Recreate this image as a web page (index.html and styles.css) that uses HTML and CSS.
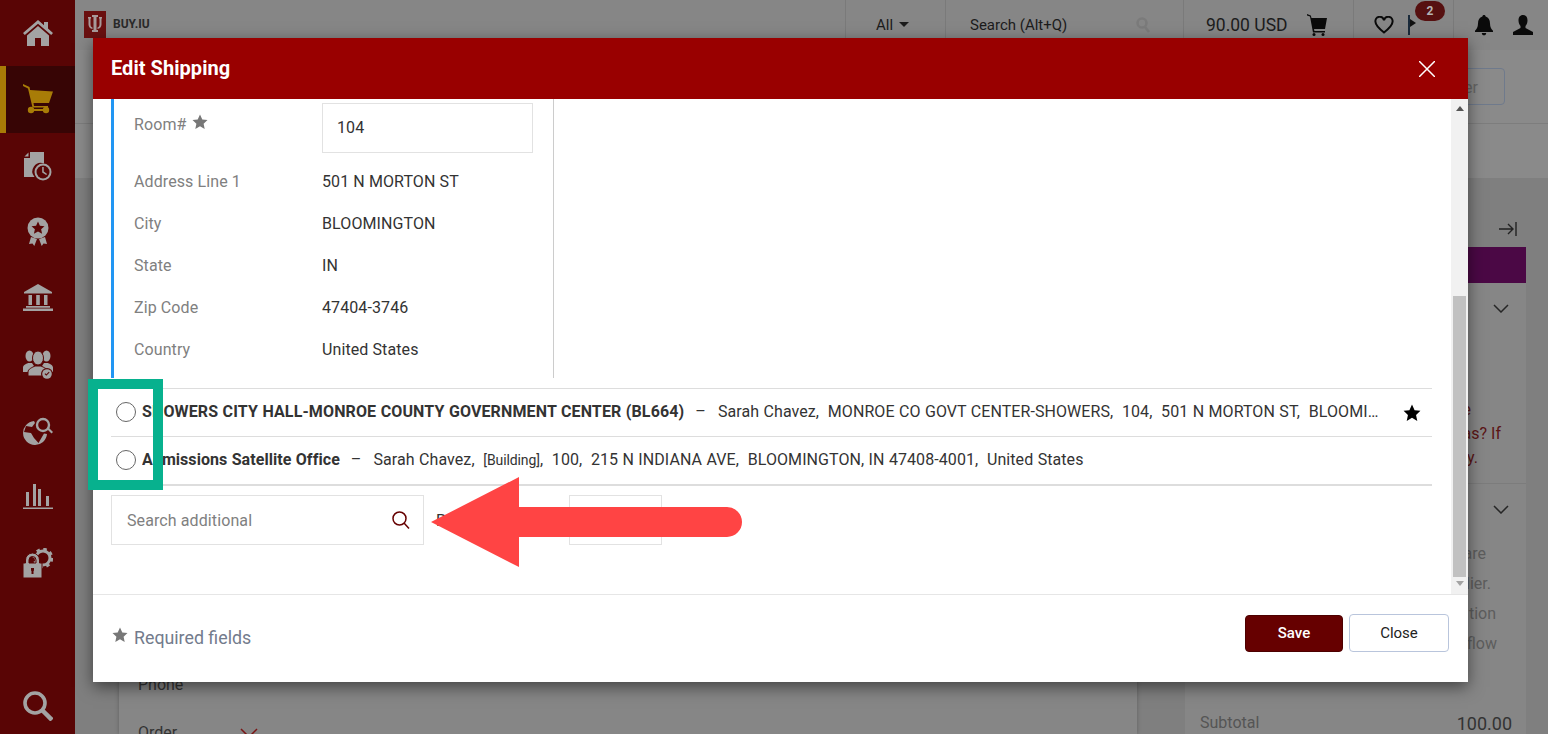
FILE: index.html
```html
<!DOCTYPE html>
<html lang="en">
<head>
<meta charset="utf-8">
<title>Edit Shipping</title>
<link rel="stylesheet" href="styles.css">
</head>
<body>
<div class="app">
  <nav class="sidebar">
    <a class="nav-item"><svg class="nav-icon" viewBox="0 0 30 30"><path d="M15 2 0 15l1.8 2L15 5.800 28.200 17l1.800-2-5-4.400V4h-4v3.200z"/><path d="M4 17.500 15 8l11 9.500V28h-8v-8h-6v8H4z"/></svg></a>
    <a class="nav-item active"><svg class="nav-icon" viewBox="0 0 30 30"><path d="M0 0l6.500 3 .6 3 22.900 1.500L26 19H10.500l.5 3H25v1.500H9.500L5 4.500 0 2z"/><circle cx="8" cy="26" r="3.200"/><circle cx="23" cy="26" r="3.200"/><path d="M8 25h15v2H8z"/></svg></a>
    <a class="nav-item"><svg class="nav-icon" viewBox="0 0 30 30"><path d="M7 1h14v11.500A8.500 8.500 0 0 0 11.500 26H1V7h6zM5.500 1.500v4h-4z"/><circle cx="20" cy="21" r="8.500"/><circle class="cut" cx="20" cy="21" r="6.500"/><path d="M19.200 16h1.500v4.600l3.400 2.300-.9 1.200-4-2.700z"/></svg></a>
    <a class="nav-item"><svg class="nav-icon" viewBox="0 0 30 30"><circle cx="15" cy="11" r="10.500"/><path class="cut" d="m15 4.500 1.900 4.200 4.600.5-3.400 3.100 1 4.500-4.100-2.300-4.100 2.300 1-4.500-3.400-3.100 4.600-.5z"/><path d="M8 20l6 2-2.700 7-1.800-2.400-3.500.4zM22 20l-6 2 2.700 7 1.800-2.400 3.500.4z"/></svg></a>
    <a class="nav-item"><svg class="nav-icon" viewBox="0 0 30 30"><path d="M15 1 1 9v1.500h28V9zM5.500 12H9v10H5.500zM13.200 12h3.600v10h-3.600zM21 12h3.500v10H21zM3 23h24v1.800H3zM0 25.500h30V28H0z"/></svg></a>
    <a class="nav-item"><svg class="nav-icon" viewBox="0 0 30 30"><ellipse cx="6.500" cy="7" rx="4" ry="5.500"/><path d="M0 23v-4.500c0-2.500 3-3.500 5-4.500h4l2 3-6 6z"/><ellipse cx="23.500" cy="7" rx="4" ry="5.500"/><path d="M30 23v-4.500c0-2.500-3-3.500-5-4.500h-4l-2 3 6 6z"/><ellipse class="outlined" cx="15" cy="9" rx="5.500" ry="7"/><path class="outlined" d="M5 27v-4c0-3 4-4.500 7-6h6c3 1.500 7 3 7 6v4z"/><circle class="cut" cx="24" cy="25" r="6"/><circle cx="24" cy="25" r="4.800"/><path class="cut" d="m21.500 25 1.800 1.800 3.300-3.300-.8-.8-2.500 2.500-1-1z"/></svg></a>
    <a class="nav-item"><svg class="nav-icon" viewBox="0 0 30 30"><path d="M11 5a12 12 0 1 0 13 13l-3-.5-5.500 9.500L11 22l-3-5-7-1 2-6 6 1 3-4z"/><circle cx="20" cy="9" r="6" class="lens"/><path d="m24 13 1.500-1.500 4.500 4.500-1.500 1.500z"/></svg></a>
    <a class="nav-item"><svg class="nav-icon" viewBox="0 0 30 30"><path d="M3 10h3v14H3zM10 2h3v22h-3zM15 7h3v17h-3zM23 14h3v10h-3zM0 25.500h30v1.500H0z"/></svg></a>
    <a class="nav-item"><svg class="nav-icon" viewBox="0 0 30 30"><circle class="gear-body" cx="20" cy="10" r="7"/><circle class="gear-teeth" cx="20" cy="10" r="9"/><path class="outlined" fill-rule="evenodd" d="M0 15h2.500v-3a7 7 0 0 1 14 0v3H19v15H0zM6 15h7v-3a3.500 3.500 0 0 0-7 0z"/><path class="cut" d="M8 20h3v2.500l-.5.500v3h-2v-3L8 22.500z"/></svg></a>
    <a class="nav-item search"><svg class="nav-icon" viewBox="0 0 30 30"><circle class="ring" cx="12" cy="12" r="10"/><path class="handle" d="m19 19 10 10"/></svg></a>
  </nav>

  <main class="page">
    <header class="topbar">
      <div class="brand">
        <svg class="brand-mark" viewBox="0 0 22 27"><path class="mark-bg" d="M0 0h22v27H0z"/><path class="mark-fg" d="M8 4h6v2h-1.500v13H14v2H8v-2h1.500V6H8zM4 6h3v1.500H6.500v6c0 1.500.7 2.500 2 3v1.500c-2.500-.5-4-2.300-4-4.500v-6H4zM15 6h3v1.500h-.5v6c0 2.200-1.500 4-4 4.500v-1.500c1.300-.5 2-1.500 2-3v-6H15z"/></svg>
        <span class="brand-name">BUY.IU</span>
      </div>
      <div class="cell cell-scope">All <span class="caret"></span></div>
      <div class="cell cell-search">
        <span>Search (Alt+Q)</span>
        <svg class="ghost-search" viewBox="0 0 16 16"><circle cx="7" cy="6" r="4.500"/><path d="m10 10 4 5"/></svg>
      </div>
      <div class="cell cell-cart">
        <span class="amount">90.00 USD</span>
        <svg class="top-icon" viewBox="0 0 20 22"><path d="M0 0l3.800 1.500L4.500 4H20l-2 11H7l.4 2H18v1.500H6L3 2.500 0 1.500z"/><circle cx="7" cy="20.500" r="1.500"/><circle cx="16" cy="20.500" r="1.500"/></svg>
      </div>
      <div class="cell cell-alerts">
        <svg class="heart" viewBox="0 0 20 18"><path d="M10 16.500C5 12.500 1.500 9.500 1.500 6A4.200 4.200 0 0 1 10 4.200 4.200 4.200 0 0 1 18.500 6c0 3.500-3.500 6.500-8.500 10.500z"/></svg>
        <span class="flag"><span class="badge">2</span></span>
      </div>
      <div class="cell cell-user">
        <svg class="top-icon" viewBox="0 0 20 22"><path d="M10 1c1 0 1.600.7 1.600 1.600C14.600 3.400 16 6 16 9.500c0 4 1.500 5.800 3 7.300V18H1v-1.200c1.500-1.500 3-3.300 3-7.300 0-3.500 1.400-6.100 4.400-6.900C8.400 1.700 9 1 10 1z"/><path d="M7.800 19h4.400c0 1.400-1 2.300-2.200 2.300S7.800 20.400 7.800 19z"/></svg>
        <svg class="top-icon" viewBox="0 0 20 20"><path d="M10 0c3 0 4.500 2.300 4.500 5.500 0 2.500-1 4.500-2 5.500v2l7.500 4v3H0v-3l7.500-4v-2c-1-1-2-3-2-5.500C5.500 2.300 7 0 10 0z"/></svg>
      </div>
    </header>
    <div class="subbar"><span class="sub-button">Checkout Order</span></div>
    <div class="band"></div>
    <div class="content">
      <section class="card">
        <p class="card-label">Phone</p>
        <div class="card-order">
          <span class="card-label">Order</span>
          <svg class="order-chevron" viewBox="0 0 18 10"><path d="m1 1 8 8 8-8"/></svg>
        </div>
      </section>
      <aside class="panel">
        <div class="panel-tool">
          <svg class="collapse" viewBox="0 0 18 16"><path d="M0 8h14M9 3l5 5-5 5M17 1v14"/></svg>
        </div>
        <div class="panel-head"></div>
        <div class="panel-sec sec-one">
          <svg class="chev" viewBox="0 0 16 9"><path d="m1 1 7 7 7-7"/></svg>
          <p class="warn warn-a">e</p>
          <p class="warn warn-b">as? If</p>
          <p class="warn warn-c">y.</p>
        </div>
        <div class="panel-sec sec-two">
          <svg class="chev" viewBox="0 0 16 9"><path d="m1 1 7 7 7-7"/></svg>
          <p class="info info-a">are</p>
          <p class="info info-b">lier.</p>
          <p class="info info-c">tion</p>
          <p class="info info-d">flow</p>
        </div>
        <div class="total"><span>Subtotal</span><span class="total-num">100.00</span></div>
      </aside>
    </div>
  </main>

  <div class="modal">
    <div class="modal-head">
      <h2 class="modal-title">Edit Shipping</h2>
      <svg class="modal-x" viewBox="0 0 16 16"><path d="m0 0 16 16M16 0 0 16"/></svg>
    </div>
    <div class="modal-body">
      <div class="modal-scroll">
        <div class="address">
          <div class="fields">
            <div class="field field-room">
              <span class="f-label">Room# <svg class="star-grey" viewBox="0 0 16 16"><path d="m8 .5 2.300 5 5.200.6-3.900 3.600 1.100 5.300L8 12.300 3.300 15l1.100-5.300L.5 6.100l5.200-.6z"/></svg></span>
              <span class="f-input">104</span>
            </div>
            <div class="field"><span class="f-label">Address Line 1</span><span>501 N MORTON ST</span></div>
            <div class="field"><span class="f-label">City</span><span>BLOOMINGTON</span></div>
            <div class="field"><span class="f-label">State</span><span>IN</span></div>
            <div class="field"><span class="f-label">Zip Code</span><span>47404-3746</span></div>
            <div class="field"><span class="f-label">Country</span><span>United States</span></div>
          </div>
        </div>
        <div class="options">
          <div class="option">
            <span class="radio"></span>
            <span class="option-text"><b class="caps">SHOWERS CITY HALL-MONROE COUNTY GOVERNMENT CENTER (BL664)</b><span class="dash">–</span>Sarah Chavez,&nbsp; MONROE CO GOVT CENTER-SHOWERS,&nbsp; 104,&nbsp; 501 N MORTON ST,&nbsp; BLOOMINGTON, IN 47404-3746,&nbsp; United States</span>
            <svg class="star-black" viewBox="0 0 16 16"><path d="m8 .5 2.300 5 5.200.6-3.900 3.600 1.100 5.300L8 12.300 3.300 15l1.100-5.300L.5 6.100l5.200-.6z"/></svg>
          </div>
          <div class="option">
            <span class="radio"></span>
            <span class="option-text"><b>Admissions Satellite Office</b><span class="dash">–</span>Sarah Chavez,&nbsp; <small>[Building]</small>,&nbsp; 100,&nbsp; 215 N INDIANA AVE,&nbsp; BLOOMINGTON, IN 47408-4001,&nbsp; United States</span>
          </div>
        </div>
        <div class="search-row">
          <div class="search-box">
            <span>Search additional</span>
            <svg class="search-glyph" viewBox="0 0 18 18"><circle cx="7.500" cy="7.500" r="6.500"/><path d="m12 12 5 5.500"/></svg>
          </div>
          <span class="per-label">Per page</span>
          <span class="per-box"></span>
        </div>
      </div>
      <div class="scrollbar">
        <span class="sb-up"></span>
        <span class="sb-thumb"></span>
        <span class="sb-down"></span>
      </div>
    </div>
    <div class="modal-foot">
      <div class="required">
        <svg class="star-grey" viewBox="0 0 16 16"><path d="m8 .5 2.300 5 5.200.6-3.900 3.600 1.100 5.300L8 12.300 3.300 15l1.100-5.300L.5 6.100l5.200-.6z"/></svg>
        <span>Required fields</span>
      </div>
      <div class="actions">
        <button class="btn btn-save">Save</button>
        <button class="btn btn-close">Close</button>
      </div>
    </div>
  </div>

  <div class="mark-box"></div>
  <svg class="mark-arrow" viewBox="0 0 312 90"><path d="M1 45 89 0v30h208a15 15 0 0 1 0 30H89v30z"/></svg>
</div>
</body>
</html>
```

FILE: styles.css
```css
* { box-sizing: border-box; }
html, body { margin: 0; height: 100%; overflow: hidden; }
body { font-family: Roboto, "Liberation Sans", sans-serif; font-size: 16px; color: #333; background: #7f7f7f; }
p, h2 { margin: 0; }

.app { position: relative; display: flex; width: 1548px; height: 734px; overflow: hidden; }

/* sidebar */
.sidebar { flex: 0 0 75px; display: flex; flex-direction: column; background: #590505; }
.nav-item { flex: 0 0 66.25px; display: flex; align-items: center; justify-content: center; }
.nav-icon { width: 30px; height: 30px; fill: #a3a3a3; }
.nav-icon .cut { fill: #590505; }
.nav-icon .outlined { stroke: #590505; stroke-width: 1; }
.nav-icon .lens { fill: none; stroke: #a3a3a3; stroke-width: 2.400; }
.nav-icon .gear-body { fill: none; stroke: #a3a3a3; stroke-width: 3; }
.nav-icon .gear-teeth { fill: none; stroke: #a3a3a3; stroke-width: 2.500; stroke-dasharray: 3.500 3.570; }
.nav-item.active { background: #370505; border-left: 6px solid #a87c07; padding-right: 6px; }
.nav-item.active .nav-icon { fill: #a87c07; }
.nav-item.search { margin-top: auto; flex-basis: 56px; }
.ring, .handle { fill: none; stroke: #a3a3a3; stroke-width: 3.600; }
.handle { stroke-width: 4.500; }

/* page behind the dialog */
.page { flex: 1; display: flex; flex-direction: column; min-width: 0; }
.topbar { flex: 0 0 50px; display: flex; background: #868686; color: #1c1c1c; }
.brand { flex: 1; display: flex; align-items: flex-start; gap: 7px; padding: 11px 0 0 9px; }
.brand-mark { width: 22px; height: 27px; }
.mark-bg { fill: #6a1010; }
.mark-fg { fill: #a89a9a; }
.brand-name { font-size: 12px; font-weight: 700; line-height: 27px; color: #2a2a2a; }
.cell { display: flex; align-items: center; border-left: 1px solid #7a7a7a; padding-bottom: 1px; }
.cell-scope { flex: 0 0 100px; padding-left: 30px; font-size: 15px; }
.caret { margin-left: 6px; border: 5px solid transparent; border-top-color: #1c1c1c; border-bottom-width: 0; }
.cell-search { flex: 0 0 238px; padding-left: 24px; font-size: 15px; gap: 68px; }
.ghost-search { width: 16px; height: 16px; fill: none; stroke: #7b7b7b; stroke-width: 2.500; }
.cell-cart { flex: 0 0 170px; padding-left: 22px; gap: 19px; }
.amount { font-size: 17.500px; }
.top-icon { width: 20px; height: 22px; fill: #0a0a0a; }
.cell-alerts { flex: 0 0 100px; padding-left: 20px; }
.heart { width: 20px; height: 18px; fill: none; stroke: #0a0a0a; stroke-width: 2; }
.flag { position: relative; width: 8px; height: 20px; margin-left: 14px; border-left: 2px solid #1a2a3a; }
.flag::after { content: ""; position: absolute; left: 0; top: 4px; border: 4px solid transparent; border-left: 6px solid #111; }
.badge { position: absolute; z-index: 1; left: 5px; top: -14px; width: 30px; height: 20px; border-radius: 10px; background: #561010; color: #b5b5b5; font-size: 12px; font-weight: 700; line-height: 20px; text-align: center; }
.cell-user { flex: 0 0 95px; padding-left: 20px; gap: 19px; }

.subbar { flex: 0 0 74px; display: flex; justify-content: flex-end; align-items: flex-start; padding: 18px 43px 0 0; background: #8a8a8a; border-bottom: 1px solid #7d7d7d; }
.sub-button { padding: 0 26px 0 20px; height: 37px; line-height: 37px; border: 1px solid #6f7a8c; border-radius: 4px; color: #666; }
.band { flex: 0 0 54px; background: #8a8a8a; }

.content { flex: 1; display: flex; gap: 48px; padding: 0 22px 0 44px; min-height: 0; }
.card { flex: 0 0 1018px; background: #868686; padding: 495px 0 0 19px; box-shadow: 0 0 4px rgba(0,0,0,.25); }
.card-label { color: #333; line-height: 24px; }
.card-order { display: flex; align-items: center; margin-top: 24px; gap: 63px; }
.order-chevron { width: 18px; height: 10px; fill: none; stroke: #7a1515; stroke-width: 1.500; }

.panel { flex: 0 0 341px; display: flex; flex-direction: column; }
.panel-tool { flex: 0 0 69px; display: flex; justify-content: flex-end; align-items: flex-start; padding: 43px 9px 0 0; }
.collapse { width: 18px; height: 16px; fill: none; stroke: #222; stroke-width: 1.400; }
.panel-head { flex: 0 0 36px; background: #4b0845; }
.panel-sec { position: relative; background: #868686; border-bottom: 1px solid #7c7c7c; }
.chev { position: absolute; right: 17px; width: 16px; height: 9px; fill: none; stroke: #262626; stroke-width: 1.500; }
.sec-one { flex: 0 0 201px; padding-top: 115px; }
.sec-one .chev { top: 21px; }
.warn { line-height: 24px; color: #5b1515; text-align: right; }
.warn-a { padding-right: 55px; }
.warn-b { padding-right: 25px; }
.warn-c { padding-right: 48px; }
.sec-two { flex: 0 0 214px; padding-top: 55px; border-bottom: 0; }
.sec-two .chev { top: 21px; }
.info { line-height: 30px; color: #5d5d5d; text-align: right; }
.info-a { padding-right: 40px; }
.info-b { padding-right: 35px; }
.info-c { padding-right: 30px; }
.info-d { padding-right: 29px; }
.total { flex: 1; display: flex; justify-content: space-between; align-items: flex-start; padding: 15px 14px 0 15px; background: #868686; color: #555; }
.total-num { font-size: 18px; color: #333; }

/* dialog */
.modal { position: absolute; left: 93px; top: 38px; width: 1375px; height: 644px; display: flex; flex-direction: column; background: #fff; box-shadow: 0 5px 15px rgba(0,0,0,.5); }
.modal-head { flex: 0 0 61px; display: flex; align-items: center; justify-content: space-between; padding: 0 33px 2px 18px; background: #990000; color: #fff; }
.modal-title { font-size: 20px; font-weight: 700; letter-spacing: .05px; }
.modal-x { width: 16px; height: 16px; margin-top: 2px; fill: none; stroke: #fff; stroke-width: 1.500; }
.modal-body { flex: 1; display: flex; min-height: 0; border-bottom: 1px solid #e6e6e6; }
.modal-scroll { flex: 1; min-width: 0; padding: 0 19px 0 18px; }

.address { height: 279px; border-left: 3px solid #2196f3; padding-left: 20px; }
.fields { width: 420px; height: 100%; padding-top: 4px; border-right: 1px solid #ccc; }
.field { display: flex; align-items: center; height: 42px; color: #333; letter-spacing: .1px; }
.f-label { flex: 0 0 188px; color: #808080; }
.field-room { height: 57px; align-items: flex-start; }
.field-room .f-label { padding-top: 11px; }
.f-input { width: 211px; height: 50px; padding-left: 14px; line-height: 48px; border: 1px solid #e2e2e2; }
.star-grey { width: 16px; height: 16px; margin-left: 1px; fill: #777; }

.options { margin-top: 10px; border-bottom: 2px solid #ddd; }
.option { display: flex; align-items: center; height: 48px; padding: 0 0 2px 5px; border-top: 1px solid #ddd; color: #333; }
.radio { flex: 0 0 20px; height: 20px; margin-right: 6px; border: 1px solid #666; border-radius: 50%; background: #fff; }
.option-text { flex: 0 0 1241px; white-space: nowrap; overflow: hidden; text-overflow: ellipsis; letter-spacing: .08px; word-spacing: .3px; }
.option-text b { font-weight: 700; letter-spacing: .06px; }
.option-text b.caps { letter-spacing: .13px; }
.option-text small { font-size: 14px; letter-spacing: -.1px; }
.dash { margin: 0 12px 0 11px; }
.star-black { width: 18px; height: 18px; margin: 2px 0 0 20px; fill: #000; }

.search-row { display: flex; align-items: center; margin-top: 9px; }
.search-box { flex: 0 0 313px; height: 50px; display: flex; align-items: center; justify-content: space-between; padding: 0 13px 0 15px; border: 1px solid #e2e2e2; color: #808080; letter-spacing: .1px; }
.search-glyph { width: 18px; height: 18px; fill: none; stroke: #660000; stroke-width: 1.500; }
.per-label { flex: 0 0 145px; padding-left: 12px; color: #333; white-space: nowrap; }
.per-box { flex: 0 0 93px; height: 50px; border: 1px solid #e2e2e2; }

.scrollbar { flex: 0 0 17px; display: flex; flex-direction: column; align-items: center; background: #f1f1f1; }
.sb-up { margin-top: 7px; border: 4px solid transparent; border-bottom: 5px solid #555; border-top-width: 0; }
.sb-thumb { width: 13px; height: 281px; margin-top: 185px; background: #c1c1c1; }
.sb-down { margin-top: 4px; border: 4px solid transparent; border-top: 5px solid #a3a3a3; border-bottom-width: 0; }

.modal-foot { flex: 0 0 87px; display: flex; justify-content: space-between; align-items: flex-start; padding: 19px 19px 0 19px; }
.required { display: flex; align-items: center; gap: 6px; margin-top: 13px; font-size: 17.800px; color: #737b8c; }
.required .star-grey { margin: -6px 0 0; }
.actions { display: flex; align-items: center; gap: 6px; }
.btn { font: 500 15px Roboto, "Liberation Sans", sans-serif; border-radius: 4px; }
.btn-save { width: 98px; height: 37px; border: 1px solid #4d0000; background: #660000; color: #fff; }
.btn-close { width: 100px; height: 38px; border: 1px solid #b9c5dc; background: #fff; color: #222; font-weight: 400; }

/* annotations drawn on top of the screenshot */
.mark-box { position: absolute; left: 88px; top: 379px; width: 75px; height: 111px; border: 10px solid #07b18e; }
.mark-arrow { position: absolute; left: 430px; top: 477px; width: 312px; height: 90px; fill: #ff4444; }
```
